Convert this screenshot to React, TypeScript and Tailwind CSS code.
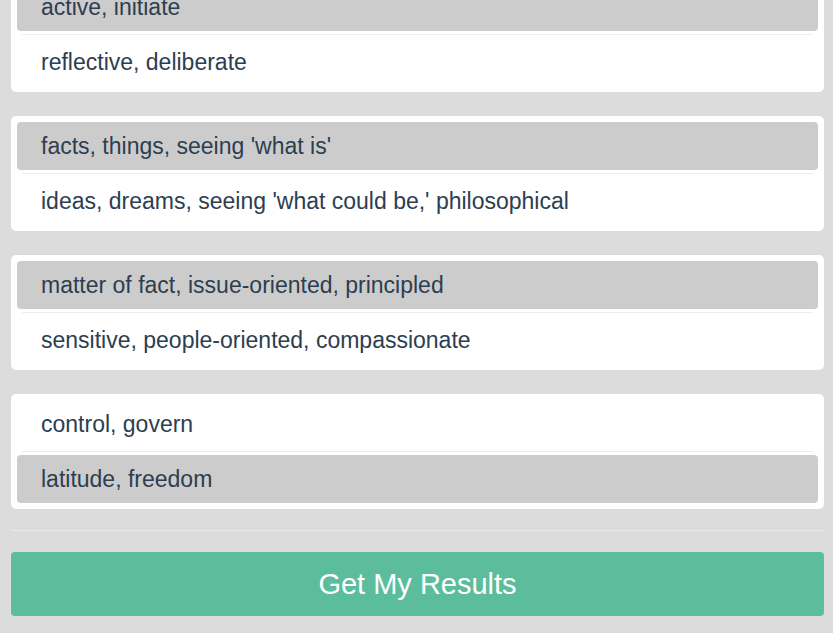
import React, { useState } from 'react';

interface Question {
  id: number;
  options: [string, string];
}

const questions: Question[] = [
  { id: 1, options: ['active, initiate', 'reflective, deliberate'] },
  { id: 2, options: ["facts, things, seeing 'what is'", "ideas, dreams, seeing 'what could be,' philosophical"] },
  { id: 3, options: ['matter of fact, issue-oriented, principled', 'sensitive, people-oriented, compassionate'] },
  { id: 4, options: ['control, govern', 'latitude, freedom'] },
];

function Option({
  label,
  selected,
  onClick,
}: {
  label: string;
  selected: boolean;
  onClick: () => void;
}) {
  return (
    <button
      type="button"
      onClick={onClick}
      className={`flex h-12 w-full items-center rounded-[4px] pl-6 text-left text-[23px] text-[#2c3e50] ${
        selected ? 'bg-[#cccccc]' : 'bg-white'
      }`}
    >
      {label}
    </button>
  );
}

export default function App() {
  const [answers, setAnswers] = useState<Record<number, number>>({
    1: 0,
    2: 0,
    3: 0,
    4: 1,
  });

  return (
    <div
      className="min-h-screen overflow-hidden bg-[#dcdcdc] pl-[11px] pr-[9px] pb-[17px]"
      style={{ fontFamily: '"Liberation Sans", Arial, sans-serif' }}
    >
      <div className="-mt-[23px] flex flex-col gap-[24px]">
        {questions.map((q) => (
          <div key={q.id} className="rounded-[5px] bg-white p-[6px]">
            <Option
              label={q.options[0]}
              selected={answers[q.id] === 0}
              onClick={() => setAnswers((prev) => ({ ...prev, [q.id]: 0 }))}
            />
            <div className="mx-[5px] mt-[3px] mb-[3px] h-px bg-[#eeeeee]" />
            <Option
              label={q.options[1]}
              selected={answers[q.id] === 1}
              onClick={() => setAnswers((prev) => ({ ...prev, [q.id]: 1 }))}
            />
          </div>
        ))}
      </div>

      <div className="mt-[21px] h-px bg-[#e9e9e9]" />

      <button
        type="button"
        className="mt-[21px] flex h-16 w-full items-center justify-center rounded-[4px] bg-[#5bbd9c] pt-[2px] text-[29px] text-white"
      >
        Get My Results
      </button>
    </div>
  );
}
